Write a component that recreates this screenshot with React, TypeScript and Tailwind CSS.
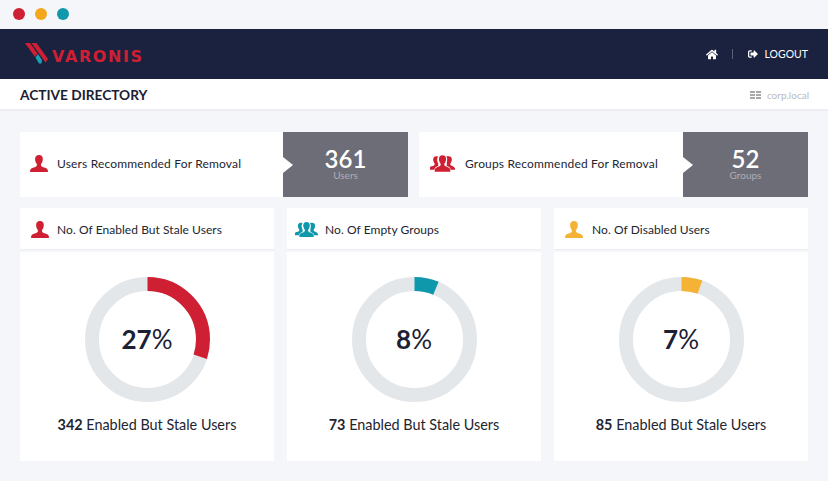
import React from 'react';
import { FaHome, FaSignOutAlt } from 'react-icons/fa';

const RED = '#cf1f33';

const PersonIcon: React.FC<{ color: string; className?: string }> = ({ color, className }) => (
  <svg viewBox="0 0 18 17" className={className} fill={color}>
    <path d="M9 0C6.400 0 5 1.800 5.100 4.200c.1 2 .8 3.600 1.600 4.600.3.400.3 1.600-.1 2.200-.4.600-1.400 1-2.900 1.500C1.800 13.200.4 13.800.2 15.200L0 17h18l-.2-1.800c-.2-1.400-1.600-2-3.600-2.700-1.500-.5-2.500-.9-2.900-1.500-.4-.6-.4-1.800-.1-2.200.8-1 1.500-2.600 1.600-4.600C13 1.800 11.600 0 9 0z" />
  </svg>
);

const GroupIcon: React.FC<{ color: string; className?: string }> = ({ color, className }) => (
  <svg viewBox="0 0 26 17" className={className} fill={color}>
    <path d="M6.500 1c-2.200 0-3.300 1.500-3.200 3.500.1 1.600.7 2.900 1.400 3.700.3.400.2 1.400-.1 1.900-.4.500-1.300.8-2.400 1.300C1.200 11 .2 11.700 0 12.800V15h4.600l.3-1.200c.4-1.300 1.700-2 3.400-2.600l.4-.2c-.2-.5-.3-1.700 0-2.200C8 7.800 7.500 6.200 7.500 4.300c0-1.300.4-2.300 1-3C8 1.100 7.300 1 6.500 1z" />
    <path d="M19.500 1c2.200 0 3.300 1.500 3.200 3.500-.1 1.600-.7 2.900-1.400 3.700-.3.400-.2 1.400.1 1.900.4.500 1.300.8 2.400 1.300 1 .6 2 1.300 2.200 2.400V15h-4.600l-.3-1.200c-.4-1.300-1.700-2-3.400-2.600l-.4-.2c.2-.5.3-1.700 0-2.200.1-1 .6-2.600.6-4.500 0-1.300-.4-2.300-1-3 .5-.2 1.200-.3 2-.3z" />
    <path d="M13 0c-2.400 0-3.800 1.700-3.700 4.100.1 1.900.8 3.500 1.600 4.500.3.400.3 1.500-.1 2.100-.4.600-1.500 1-2.900 1.500-1.500.6-2.500 1.200-2.800 2.300L4.800 17h16.400l-.3-2.500c-.3-1.100-1.300-1.700-2.800-2.300-1.400-.5-2.500-.9-2.900-1.500-.4-.6-.4-1.700-.1-2.100.8-1 1.500-2.600 1.600-4.500C16.800 1.700 15.400 0 13 0z" />
  </svg>
);

// arc is what the picture draws, label is what it says: they differ a little
const Ring: React.FC<{ pct: number; arc: number; color: string }> = ({ pct, arc, color }) => {
  const r = 55.5;
  const circ = 2 * Math.PI * r;
  return (
    <div className="relative w-[125px] h-[125px]">
      <svg viewBox="0 0 125 125" className="w-full h-full -rotate-90">
        <circle cx="62.500" cy="62.500" r={r} fill="none" stroke="#e4e7ea" strokeWidth="14" />
        <circle cx="62.500" cy="62.500" r={r} fill="none" stroke={color} strokeWidth="14" strokeDasharray={`${(circ * arc) / 100} ${circ}`} />
      </svg>
      <div className="absolute inset-0 flex items-center justify-center text-[26px] text-[#1b2033]">
        <span className="font-bold">{pct}</span>%
      </div>
    </div>
  );
};

const TopCard: React.FC<{ icon: React.ReactNode; label: string; value: string; unit: string; className: string; rowClass: string }> = ({ icon, label, value, unit, className, rowClass }) => (
  <div className={`h-[65px] flex bg-white ${className}`}>
    <div className={`flex-1 flex items-center pb-[2px] ${rowClass}`}>
      {icon}
      <span className="text-[12px] tracking-[0.17px] text-[#22252f]">{label}</span>
    </div>
    <div className="relative w-[125px] bg-[#6d6d78] flex flex-col items-center text-white pt-[14px]">
      <div className="absolute left-0 top-[25px] w-0 h-0 border-y-[8px] border-y-transparent border-l-[10px] border-l-white" />
      <span className="text-[24px] leading-[25px] font-semibold">{value}</span>
      <span className="text-[10px] leading-[8px] text-[#aeaeb6]">{unit}</span>
    </div>
  </div>
);

const StatCard: React.FC<{ icon: React.ReactNode; title: string; pct: number; arc: number; color: string; count: string; gap: string }> = ({ icon, title, pct, arc, color, count, gap }) => (
  <div className="flex-1 flex flex-col gap-[2px]">
    <div className={`h-[42px] bg-white flex items-center pl-[8px] pt-[2px] border-b border-[#eceef2] ${gap}`}>
      <div className="w-[23px] flex justify-center">{icon}</div>
      <span className="text-[12px] tracking-[0.05px] text-[#22252f]">{title}</span>
    </div>
    <div className="h-[209px] bg-white flex flex-col items-center pt-[25px]">
      <Ring pct={pct} arc={arc} color={color} />
      <div className="mt-[12px] text-[14.400px] text-[#22252f]">
        <span className="font-bold">{count}</span> Enabled But Stale Users
      </div>
    </div>
  </div>
);

export default function App() {
  return (
    <div className="w-[828px] h-[481px] overflow-hidden bg-[#f5f6fa] font-['Lato',sans-serif]">
      <div className="h-[29px] flex items-center pl-[13px] gap-[10px] pb-[1px]">
        <span className="w-3 h-3 rounded-full bg-[#cf1f33]" />
        <span className="w-3 h-3 rounded-full bg-[#f5a71c]" />
        <span className="w-3 h-3 rounded-full bg-[#0f98ab]" />
      </div>

      <div className="h-[50px] bg-[#1b2240] flex items-center justify-between pl-[24px] pr-[20px]">
        <div className="flex items-center">
          <svg viewBox="0 0 24 21" className="w-[24px] h-[21px] mt-[-2px]">
            <path d="M1 0H6L13.500 10.500 11 14z" fill={RED} />
            <path d="M7.500 0H12.500L24 16 21.500 19.500z" fill={RED} />
            <path d="M11.500 14.500L14 11 18 17 17.500 20.500 15 20.500z" fill="#1aa0b0" />
          </svg>
          <span className="text-[16px] leading-none font-bold tracking-[1.600px] ml-[4px] mt-[5px] text-[#cf1f33] font-['DejaVu_Sans',sans-serif]">VARONIS</span>
        </div>
        <div className="flex items-center text-white">
          <FaHome className="w-[12px] h-[11px]" />
          <span className="w-px h-[10px] bg-[#5a6075] ml-[14px] mr-[15px]" />
          <FaSignOutAlt className="w-[10px] h-[10px]" />
          <span className="text-[10.500px] ml-[7px] mt-[1px]">LOGOUT</span>
        </div>
      </div>

      <div className="h-[32px] bg-white border-b-2 border-[#eceef2] flex items-center justify-between pl-[20px] pr-[19px] pt-[2px]">
        <span className="text-[13.700px] font-bold text-[#1b2033]">ACTIVE DIRECTORY</span>
        <div className="flex items-center gap-[6px] text-[10px] text-[#b9b9bb]">
          <span className="grid grid-cols-2 gap-[1px]">
            {[0, 1, 2, 3, 4, 5].map((i) => (
              <span key={i} className="w-[5px] h-[2px] bg-[#a9a9ab]" />
            ))}
          </span>
          corp.local
        </div>
      </div>

      <div className="px-[20px] pt-[21px] flex flex-col gap-[11px]">
        <div className="flex gap-[11px]">
          <TopCard className="w-[388px]" rowClass="pl-[10px] gap-[9px]" icon={<PersonIcon color={RED} className="w-[18px] h-[17px]" />} label="Users Recommended For Removal" value="361" unit="Users" />
          <TopCard className="flex-1" rowClass="pl-[11px] gap-[10px]" icon={<GroupIcon color={RED} className="w-[25px] h-[17px]" />} label="Groups Recommended For Removal" value="52" unit="Groups" />
        </div>
        <div className="flex gap-[13px]">
          <StatCard gap="gap-[6px]" icon={<PersonIcon color={RED} className="w-[18px] h-[17px]" />} title="No. Of Enabled But Stale Users" pct={27} arc={30} color={RED} count="342" />
          <StatCard gap="gap-[7px]" icon={<GroupIcon color="#0f98ab" className="w-[24px] h-[17px]" />} title="No. Of Empty Groups" pct={8} arc={6.300} color="#0f98ab" count="73" />
          <StatCard gap="gap-[7px]" icon={<PersonIcon color="#f5b335" className="w-[18px] h-[17px]" />} title="No. Of Disabled Users" pct={7} arc={5.400} color="#f5b335" count="85" />
        </div>
      </div>
    </div>
  );
}
